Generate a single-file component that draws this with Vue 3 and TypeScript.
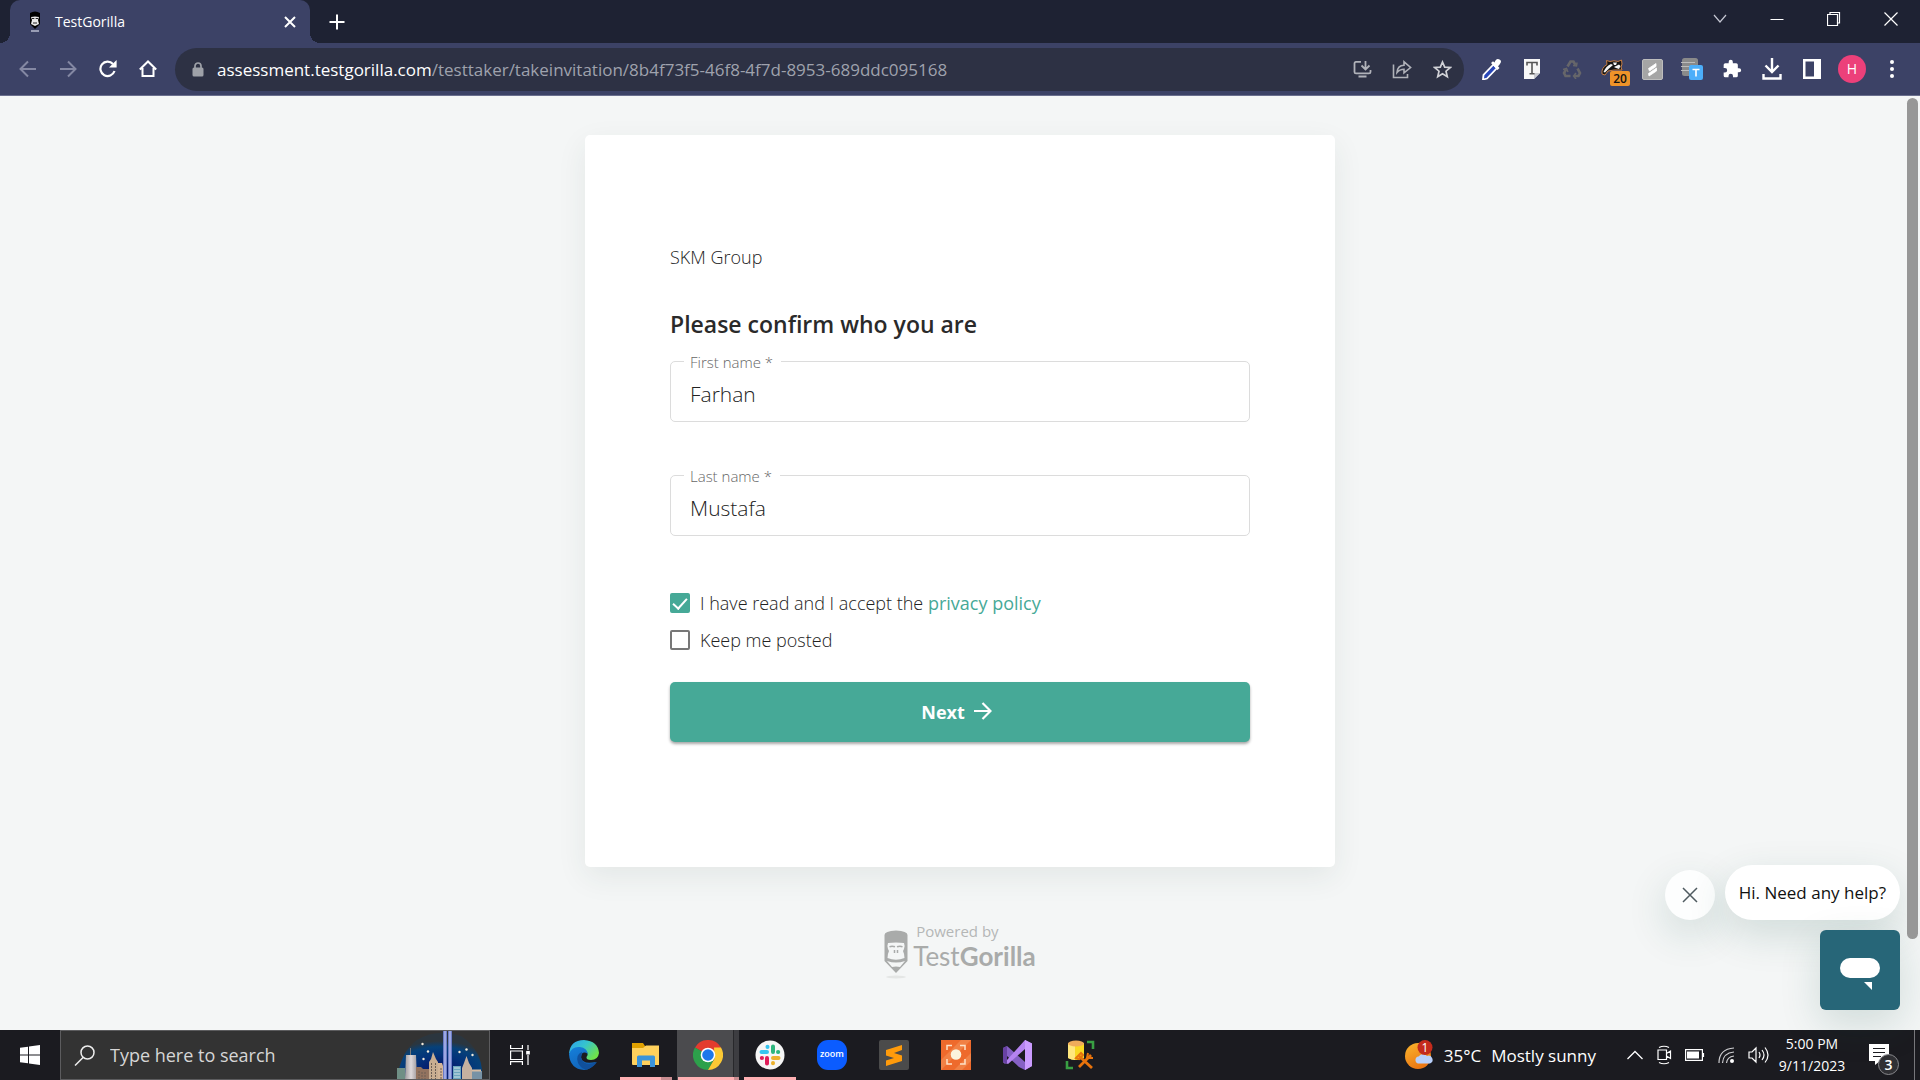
<script setup lang="ts">
import { ref } from 'vue'

const firstName = ref('Farhan')
const lastName = ref('Mustafa')
const acceptedPolicy = ref(true)
const keepPosted = ref(false)
const search = ref('')
</script>

<template>
  <div class="screen">
    <header class="tabstrip">
      <div class="tab">
        <svg class="favicon" width="12" height="22" viewBox="0 0 12 22" aria-hidden="true">
          <path d="M1 2Q6-1 11 2V13L6 18L1 13Z" fill="#000" />
          <path d="M2 6Q6 5 10 6L9 9L10 13L6 15L2 13L3 9Z" fill="#e8e8e8" />
          <path d="M3 7.500H5.300M6.700 7.500H9M4 12H8" stroke="#222" stroke-width="1" />
          <path d="M2 20H10" stroke="#b9bdd0" stroke-width="1.500" />
        </svg>
        <span class="tab-title">TestGorilla</span>
        <button class="plain tab-close" aria-label="Close tab">
          <svg width="12" height="12" viewBox="0 0 12 12"><path d="M1 1L11 11M11 1L1 11" stroke="#fff" stroke-width="2" /></svg>
        </button>
      </div>
      <button class="plain new-tab" aria-label="New tab">
        <svg width="16" height="16" viewBox="0 0 16 16"><path d="M8 0.500V15.500M0.500 8H15.500" stroke="#fff" stroke-width="2" /></svg>
      </button>
      <div class="window-buttons">
        <button class="plain" aria-label="Search tabs">
          <svg width="14" height="10" viewBox="0 0 14 10"><path d="M1 1L7 8L13 1" fill="none" stroke="#c4c6d2" stroke-width="1.200" /></svg>
        </button>
        <button class="plain" aria-label="Minimize">
          <svg width="14" height="14" viewBox="0 0 14 14"><path d="M0.500 7.500H13.500" stroke="#fff" /></svg>
        </button>
        <button class="plain" aria-label="Restore">
          <svg width="14" height="16" viewBox="0 0 14 16"><path d="M0.500 3.500H10.500V14.500H0.500ZM3 3V1.500H12.500V12H11" fill="none" stroke="#fff" stroke-width="1.200" /></svg>
        </button>
        <button class="plain" aria-label="Close">
          <svg width="14" height="14" viewBox="0 0 14 14"><path d="M0.500 0.500L13.500 13.500M13.500 0.500L0.500 13.500" stroke="#fff" stroke-width="1.200" /></svg>
        </button>
      </div>
    </header>

    <nav class="toolbar" aria-label="Browser toolbar">
      <button class="plain cell" aria-label="Back">
        <svg width="18" height="18" viewBox="0 0 18 18"><path d="M17 9H2M9 1.500L1.500 9L9 16.500" fill="none" stroke="#8488a3" stroke-width="2" /></svg>
      </button>
      <button class="plain cell" aria-label="Forward">
        <svg width="18" height="18" viewBox="0 0 18 18"><path d="M1 9H16M9 1.500L16.500 9L9 16.500" fill="none" stroke="#8488a3" stroke-width="2" /></svg>
      </button>
      <button class="plain cell" aria-label="Reload">
        <svg width="18" height="18" viewBox="0 0 18 18"><path d="M15.500 11A7.200 7.200 0 1 1 14 4" fill="none" stroke="#fff" stroke-width="2.200" /><path d="M17.600 0V7.500H10Z" fill="#fff" /></svg>
      </button>
      <button class="plain cell" aria-label="Home">
        <svg width="18" height="18" viewBox="0 0 18 18"><path d="M0.800 9.500L9 1.500L17.200 9.500M3.500 8V16H14.500V8" fill="none" stroke="#fff" stroke-width="2" /></svg>
      </button>

      <div class="omnibox">
        <svg width="12" height="15" viewBox="0 0 12 15" aria-hidden="true">
          <path d="M3 6V4A3 3 0 0 1 9 4V6" fill="none" stroke="#9ea1a8" stroke-width="1.700" />
          <rect x="0.500" y="5.500" width="11" height="9" rx="1.500" fill="#9ea1a8" />
        </svg>
        <div class="address" role="textbox" aria-label="Address" contenteditable="true" spellcheck="false"><span class="host">assessment.testgorilla.com</span>/testtaker/takeinvitation/8b4f73f5-46f8-4f7d-8953-689ddc095168</div>
        <button class="plain cell" aria-label="Install app">
          <svg width="19" height="18" viewBox="0 0 19 18" fill="none" stroke="#b0b2b9" stroke-width="1.800">
            <path d="M8 1.900H3Q1.500 1.900 1.500 3.400V12Q1.500 13.400 3 13.400H16Q17.500 13.400 17.500 12V10M5.500 16.500H13.500M12.500 1V9M8.500 5.500L12.500 9.500L16.500 5.500" />
          </svg>
        </button>
        <button class="plain cell" aria-label="Share">
          <svg width="20" height="19" viewBox="0 0 20 19" fill="none" stroke="#b0b2b9" stroke-width="1.600">
            <path d="M1.500 4.500V17.500H15.500V14M5 12.500Q5.500 5.500 12 5.300V1.800L18.600 7.500L12 12.800V9.300Q7.500 9.300 5 12.500Z" />
          </svg>
        </button>
        <button class="plain cell" aria-label="Bookmark">
          <svg width="19" height="19" viewBox="0 0 19 19"><path d="M9.500 2L11.700 7.100L17.300 7.500L13 11.200L14.300 16.700L9.500 13.800L4.700 16.700L6 11.200L1.700 7.500L7.300 7.100Z" fill="none" stroke="#d0d1d6" stroke-width="1.700" /></svg>
        </button>
      </div>

      <button class="plain cell" aria-label="Colour picker">
        <svg width="20" height="22" viewBox="0 0 20 22">
          <path d="M11.500 6.500L15 10L5 20.500L1 21.500L1.500 17Z" fill="#2947b8" stroke="#fff" stroke-width="1.800" />
          <path d="M9 5L11 3.200L12.500 4.500Q14 0 17 1.200Q20 2.500 18.500 5Q17.500 7 16 8.200L17.500 10L15.500 12Z" fill="#fff" />
        </svg>
      </button>
      <button class="plain cell" aria-label="Text tool">
        <svg width="16" height="20" viewBox="0 0 16 20">
          <path d="M0 0H16V14L10 20H0Z" fill="#f7f7f7" /><path d="M10 20V14H16Z" fill="#cacbd0" />
          <path d="M3 6.500V3.500H13V6.500M8 3.500V14.500M5.500 14.800H10.500" fill="none" stroke="#565656" stroke-width="1.600" />
        </svg>
      </button>
      <button class="plain cell" aria-label="Recycle">
        <svg width="20" height="20" viewBox="0 0 20 20" fill="none" stroke="#66666a" stroke-width="2.600">
          <path d="M5.500 7.500L8.500 2.500H11.500L13.500 6M15.500 9.500L18 14L16.500 17H12M8.500 17H3.500L2 14L4 10.500" />
          <path d="M11 6.500L14.500 7L15 3.500M14 14L11.500 17L14 20M1 10.500L4.500 9.500L6 13" stroke-width="1.500" />
        </svg>
      </button>
      <button class="plain cell badger" aria-label="Tracker blocker">
        <svg width="22" height="22" viewBox="0 0 22 22">
          <path d="M1 16Q0 10 6 6.500L5.500 2.500L9 3.500Q13 2 17 3.500L20.500 2L21 6L20 9L21 12H13L7 13L4 17Z" fill="#151515" stroke="#c77e43" />
          <path d="M2.500 14Q5 8 10 6L12 7L8 10.500L4 14.500ZM12 4.500H16L15 7H13ZM13 9L18 6.500L19.500 8L18 11L15 10Z" fill="#f4f4f4" />
        </svg>
        <span class="count">20</span>
      </button>
      <button class="plain cell" aria-label="Scribe">
        <svg width="21" height="21" viewBox="0 0 21 21">
          <rect x="0.500" y="0.500" width="20" height="20" rx="1.500" fill="#a5a5a5" stroke="#bdbdbd" />
          <path d="M6.500 9.500L14 4.500V7.500L7.500 12ZM6.500 14.500L14.500 9V12L7 17Z" fill="#fff" stroke="#fff" stroke-width="0.800" />
        </svg>
      </button>
      <button class="plain cell" aria-label="Text blocks">
        <svg width="22" height="22" viewBox="0 0 22 22">
          <rect x="1" y="0" width="16" height="18" rx="2.500" fill="#8a8a8a" />
          <path d="M0 4.500H14M0 8.500H14M0 12.500H8" stroke="#bcbcbc" stroke-width="1.200" />
          <rect x="8" y="7" width="14" height="15" rx="2" fill="#4caefa" />
          <path d="M11.500 11.500H18.500M15 11.500V18.500" stroke="#fff" stroke-width="1.600" />
        </svg>
      </button>
      <button class="plain cell" aria-label="Extensions">
        <svg width="20" height="20" viewBox="0 0 24 24"><path fill="#fff" d="M20.500 11H19V7a2 2 0 0 0-2-2h-4V3.500a2.500 2.500 0 0 0-5 0V5H4a2 2 0 0 0-2 2v3.800h1.500a2.700 2.700 0 0 1 0 5.400H2V20a2 2 0 0 0 2 2h3.800v-1.500a2.700 2.700 0 0 1 5.400 0V22H17a2 2 0 0 0 2-2v-4h1.500a2.500 2.500 0 0 0 0-5z" /></svg>
      </button>
      <button class="plain cell" aria-label="Downloads">
        <svg width="20" height="22" viewBox="0 0 20 22" fill="none" stroke="#fff" stroke-width="2.400"><path d="M10 0V13M3.500 7.500L10 14L16.500 7.500M1.500 16V20.500H18.500V16" /></svg>
      </button>
      <button class="plain cell" aria-label="Side panel">
        <svg width="18" height="20" viewBox="0 0 18 20"><path fill="#fff" fill-rule="evenodd" d="M0 0H18V20H0ZM2.500 2.500V17.500H11V2.500Z" /></svg>
      </button>
      <button class="plain cell" aria-label="Profile"><span class="avatar">H</span></button>
      <button class="plain cell" aria-label="Menu">
        <svg width="4" height="18" viewBox="0 0 4 18" fill="#fff"><circle cx="2" cy="2" r="2" /><circle cx="2" cy="9" r="2" /><circle cx="2" cy="16" r="2" /></svg>
      </button>
    </nav>

    <main class="page">
      <form class="card" @submit.prevent>
        <p class="company">SKM Group</p>
        <h1>Please confirm who you are</h1>
        <div class="field">
          <label for="first-name">First name *</label>
          <input id="first-name" v-model="firstName" type="text" />
        </div>
        <div class="field">
          <label for="last-name">Last name *</label>
          <input id="last-name" v-model="lastName" type="text" />
        </div>
        <div class="checks">
          <div class="check">
            <input id="policy" v-model="acceptedPolicy" type="checkbox" />
            <label for="policy">I have read and I accept the <a href="#privacy">privacy policy</a></label>
          </div>
          <div class="check">
            <input id="posted" v-model="keepPosted" type="checkbox" />
            <label for="posted">Keep me posted</label>
          </div>
        </div>
        <button class="next" type="submit">
          Next
          <svg width="18" height="20" viewBox="0 0 18 20" aria-hidden="true"><path d="M0 9H16M8.500 1L16.500 9L8.500 17" fill="none" stroke="#fff" stroke-width="2.200" /></svg>
        </button>
      </form>

      <footer class="powered">
        <svg class="powered-logo" width="24" height="50" viewBox="0 0 24 50" aria-hidden="true">
          <path fill="#a9abaa" fill-rule="evenodd" d="M0.500 5Q0.500 1 12 0.500Q23.500 1 23.500 5V31L12 43L0.500 31ZM4 13Q3 15 4 19L5 21Q3.500 24 3.500 28Q12 31.500 20.500 28Q20.500 24 19 21L20 19Q21 15 20 13Q12 12 4 13ZM3 31L8 37Q12 36 16 37L21 31Q12 34 3 31Z" />
          <path d="M5.500 16.800Q8 15.500 11 16.800M13 16.800Q16 15.500 18.500 16.800M10.500 20V23M13.500 20V23" fill="none" stroke="#a9abaa" stroke-width="1.500" />
          <ellipse cx="12" cy="47" rx="10" ry="1.500" fill="#e4e6e5" />
        </svg>
        <div class="powered-text">
          <span class="powered-by">Powered by</span>
          <span class="brand">Test<b>Gorilla</b></span>
        </div>
      </footer>

      <aside class="chat">
        <div class="chat-row">
          <button class="plain chat-close" aria-label="Dismiss">
            <svg width="16" height="16" viewBox="0 0 16 16"><path d="M1 1L15 15M15 1L1 15" stroke="#505b60" stroke-width="1.500" /></svg>
          </button>
          <button class="plain bubble">Hi. Need any help?</button>
        </div>
        <button class="plain launcher" aria-label="Open chat">
          <svg width="40" height="34" viewBox="0 0 40 34" fill="#fff"><rect width="40" height="20" rx="10" /><path d="M24 24H32V32Z" /></svg>
        </button>
      </aside>
      <div class="scrollbar"></div>
    </main>

    <div class="taskbar">
      <button class="plain start" aria-label="Start">
        <svg width="20" height="20" viewBox="0 0 20 20" fill="#fff"><path d="M0 2.800L8 1.700V9.400H0ZM9 1.500L20 0V9.400H9ZM0 10.500H8V18.200L0 17.200ZM9 10.500H20V20L9 18.500Z" /></svg>
      </button>
      <div class="search">
        <svg width="21" height="21" viewBox="0 0 21 21" fill="none" stroke="#eee" stroke-width="1.500" aria-hidden="true"><circle cx="13.500" cy="7.500" r="6.500" /><path d="M9 12.500L1 20.500" /></svg>
        <input v-model="search" type="text" aria-label="Type here to search" placeholder="Type here to search" />
        <svg class="skyline" width="92" height="48" viewBox="0 0 92 48" aria-hidden="true">
          <defs>
            <radialGradient id="sky" cx="50%" cy="80%" r="62%"><stop offset="0" stop-color="#0b1066" /><stop offset="0.500" stop-color="#03327a" /><stop offset="0.800" stop-color="#064179" /><stop offset="1" stop-color="#2b363f" /></radialGradient>
            <linearGradient id="beam" x1="0" x2="1" y1="0" y2="0"><stop offset="0" stop-color="#5366b8" /><stop offset="0.500" stop-color="#b4bef0" /><stop offset="1" stop-color="#5366b8" /></linearGradient>
            <linearGradient id="tower" x1="0" x2="1" y1="0" y2="0"><stop offset="0" stop-color="#9f9b9d" /><stop offset="0.500" stop-color="#ded9db" /><stop offset="1" stop-color="#a19c9e" /></linearGradient>
          </defs>
          <path d="M4 48Q8 20 24 9Q45-3 68 5Q91 20 89 48Z" fill="url(#sky)" />
          <g fill="#f3ead9"><circle cx="29.500" cy="13" r="1.200" /><circle cx="35" cy="20.500" r="1.200" /><circle cx="30.500" cy="28" r="1.200" /><circle cx="66.500" cy="21" r="1.200" /><circle cx="73.500" cy="18.500" r="1.200" /><circle cx="79.500" cy="24" r="1.200" /></g>
          <rect x="4" y="37" width="8" height="11" fill="#6f8f85" />
          <path d="M12 48L13 24H23L24 48Z" fill="url(#tower)" /><path d="M17.500 24V17" stroke="#777" />
          <path d="M23 36H28L30 38H37V48H23Z" fill="#93735f" />
          <path d="M36 48V31L38 28L40 21L43 28L45 31V48Z" fill="#c9ad91" />
          <path d="M45 32H49L51 38V48H45Z" fill="#d3b497" />
          <path d="M26 40V48M29 41V48M32 41V48M38.500 32V48M42.500 32V48M48 37V48" stroke="#6d5e55" stroke-dasharray="2 1" />
          <rect x="50" y="0" width="4" height="48" fill="url(#beam)" /><rect x="55" y="0" width="4" height="48" fill="url(#beam)" />
          <rect x="60" y="35" width="8" height="13" fill="#6ba6bd" /><path d="M61 37H67M61 40H67M61 43H67M61 46H67" stroke="#d5e4e9" />
          <path d="M69 48V37L71 32L73.500 25L76 32L79 37V48Z" fill="#c6b1a0" />
          <path d="M79 48V39H87V40H89V48Z" fill="#7792a5" /><path d="M79 39.500H88" stroke="#d5bca4" stroke-width="2" />
        </svg>
      </div>
      <button class="plain task-view" aria-label="Task view">
        <svg width="20" height="20" viewBox="0 0 20 20" fill="none" stroke="#fff" stroke-width="1.200"><path d="M0.600 0V3.500H12.400V0M0.600 6H12.400V14.500H0.600ZM0.600 20V16.700H12.400V20M18 0V5M18 10V20" /><rect x="16.800" y="6.500" width="2.400" height="2.400" fill="#fff" /></svg>
      </button>

      <div class="apps">
        <button class="plain" aria-label="Edge">
          <svg width="30" height="30" viewBox="0 0 30 30">
            <defs>
              <linearGradient id="edge-top" x1="0" y1="0" x2="1" y2="0.600"><stop offset="0" stop-color="#2b9ff0" /><stop offset="0.500" stop-color="#36c4cd" /><stop offset="1" stop-color="#6fe34a" /></linearGradient>
              <linearGradient id="edge-low" x1="0" y1="0" x2="0.500" y2="1"><stop offset="0" stop-color="#1580dc" /><stop offset="1" stop-color="#1264b8" /></linearGradient>
            </defs>
            <path d="M0 14Q1 0 15 0Q29 1 30 13Q29 20 22 20Q17 20 17.500 17Q20 14 17 11Q8 4 0 14Z" fill="url(#edge-top)" />
            <path d="M0 14Q3 6 11 7Q18 8 19 14Q13 10 12 17Q13 25 27 22Q22 30 15 30Q1 29 0 14Z" fill="url(#edge-low)" />
            <path d="M13 12Q6 15 9 23Q13 30 18 29.500Q25 27 28 22Q15 27 12 18Z" fill="#10509c" />
          </svg>
        </button>
        <button class="plain running" aria-label="File Explorer">
          <svg width="28" height="24" viewBox="0 0 28 24">
            <path d="M0 0H11L13 3H26V8H0Z" fill="#e1a100" /><path d="M0 5H11L14 2.500H27V22H1Q0 22 0 21Z" fill="#ffd15c" />
            <path d="M5 24V14Q5 12.500 6.500 12.500H21.500Q23 12.500 23 14V24H18V17.500H10V24Z" fill="#3b94da" />
          </svg>
          <i class="underline split"></i>
        </button>
        <button class="plain active" aria-label="Chrome">
          <svg width="30" height="30" viewBox="0 0 30 30">
            <path d="M15 15L2 7.500A15 15 0 0 1 28 7.500Z" fill="#e33b2e" /><path d="M15 15L2 7.500A15 15 0 0 0 15 30L21.500 18.500Z" fill="#2da04b" /><path d="M28 7.500A15 15 0 0 1 15 30L21.500 18.700L21 7.500Z" fill="#fcc934" />
            <circle cx="15" cy="15" r="7.300" fill="#fff" /><circle cx="15" cy="15" r="5.800" fill="#1d77ea" />
          </svg>
          <i class="underline split"></i>
        </button>
        <button class="plain running" aria-label="Slack">
          <svg width="30" height="30" viewBox="0 0 30 30">
            <circle cx="15" cy="15" r="14.500" fill="#f6f6f6" />
            <g fill="none" stroke-width="4" stroke-linecap="round"><path d="M6.500 12H12M12.500 7V6.800" stroke="#36c5f0" /><path d="M18 6.500V12M23 12H23.200" stroke="#2eb67d" /><path d="M12 18V23.500M7 18H6.800" stroke="#e01e5a" /><path d="M18 18H23.500M18 23V23.200" stroke="#ecb22e" /></g>
          </svg>
          <i class="underline"></i>
        </button>
        <button class="plain" aria-label="Zoom"><span class="zoom-icon">zoom</span></button>
        <button class="plain" aria-label="Sublime Text">
          <svg width="30" height="30" viewBox="0 0 30 30"><rect width="30" height="30" rx="2" fill="#4b4b4b" /><path d="M7 10L23 5V10L15 13L23 15.500V21L7 26V20.500L15 18L7 15.500Z" fill="#ff9b0b" /></svg>
        </button>
        <button class="plain" aria-label="Screen capture">
          <svg width="30" height="30" viewBox="0 0 30 30"><rect width="30" height="30" fill="#ee6a2c" /><path d="M0 20L20 0H30L0 30ZM13 30L30 13V21L21 30Z" fill="#f28b50" opacity="0.700" /><path d="M6 10V5.500H11M19 5.500H24V10M24 19V24H19M11 24H6V19" fill="none" stroke="#fde2c8" stroke-width="1.500" /><circle cx="15" cy="14.500" r="5.300" fill="#fbf3dc" /></svg>
        </button>
        <button class="plain" aria-label="Visual Studio">
          <svg width="30" height="30" viewBox="0 0 30 30"><path d="M0 8L4 6L22 22V30L16 27L4 16L3 19L4 22L2 24L0 22Z" fill="#8661c5" /><path d="M22 0L29 3.500V26L22 30V9L5 24L0 22L4 20Z" fill="#b583f0" /><path d="M0 8L4 6V24L0 22Z" fill="#6842a3" /><path d="M22 0L29 3.500V26L22 30Z" fill="#cb9cff" /></svg>
        </button>
        <button class="plain" aria-label="Database tools">
          <svg width="30" height="30" viewBox="0 0 30 30"><path d="M3 3V18Q11 22 19 18V3Z" fill="#f9d923" /><path d="M3 4V18Q6 20 10 20V5Z" fill="#ffe77d" /><ellipse cx="11" cy="3.500" rx="8" ry="3" fill="#efac5c" /><path d="M22 2H28V9M2 21V28H8" fill="none" stroke="#39a043" stroke-width="2.600" /><path d="M14 27L26 15M14 16L27 28" stroke="#e8730c" stroke-width="2.800" /><path d="M11 18L16 13L18 15L14 19ZM23 13L22 18L28 18" fill="none" stroke="#e8730c" stroke-width="2" /></svg>
        </button>
      </div>

      <button class="plain weather">
        <svg width="30" height="30" viewBox="0 0 30 30" aria-hidden="true">
          <defs><linearGradient id="sun" x1="0" y1="0" x2="0.500" y2="1"><stop offset="0" stop-color="#fbb62d" /><stop offset="1" stop-color="#ea7613" /></linearGradient></defs>
          <circle cx="14" cy="16" r="13" fill="url(#sun)" /><path d="M14 23.500A3.600 3.600 0 0 1 14.500 16.500Q19 12 23 16A3.800 3.800 0 0 1 26 23.500Z" fill="#b8d0fb" />
          <circle cx="21" cy="7.500" r="7.500" fill="#c42b1c" /><text x="21" y="12" text-anchor="middle" font-family="Open Sans, sans-serif" font-size="12" fill="#fff">1</text>
        </svg>
        <span>35°C</span><span>Mostly sunny</span>
      </button>
      <div class="tray">
        <button class="plain" aria-label="Show hidden icons"><svg width="16" height="10" viewBox="0 0 16 10"><path d="M0.500 9L8 1.500L15.500 9" fill="none" stroke="#fff" stroke-width="1.300" /></svg></button>
        <button class="plain" aria-label="Meet now"><svg width="16" height="20" viewBox="0 0 16 20" fill="none" stroke="#fff" stroke-width="1.200"><path d="M2 5H10.500V14.500H2ZM10.500 8.500L14.500 6V13.500L10.500 11M3 2.500Q8 0 13 2.500M3 17.500Q8 20 13 17.500" /></svg></button>
        <button class="plain" aria-label="Battery"><svg width="20" height="12" viewBox="0 0 20 12"><rect x="0.600" y="0.600" width="16.800" height="10.800" fill="none" stroke="#fff" stroke-width="1.200" /><rect x="2" y="2.500" width="12" height="7" fill="#fff" /><path d="M18.500 4V8" stroke="#fff" stroke-width="1.200" /></svg></button>
        <button class="plain" aria-label="Wi-Fi"><svg width="17" height="17" viewBox="0 0 17 17" fill="none" stroke="#fff" stroke-width="1.200"><path d="M1 16Q1 2 16 1M4.500 16Q5 6 16 5M8.500 16Q9 10 16 9" stroke="#cfcfd2" /><circle cx="14" cy="14" r="2" fill="#fff" stroke="none" /></svg></button>
        <button class="plain" aria-label="Volume"><svg width="22" height="18" viewBox="0 0 22 18" fill="none" stroke="#fff" stroke-width="1.200"><path d="M1 6H4L8 2V16L4 12H1ZM11 6Q13 9 11 12M14 4Q18 9 14 14M17 1.500Q23 9 17 16.500" /></svg></button>
      </div>
      <button class="plain clock"><span>5:00 PM</span><span>9/11/2023</span></button>
      <button class="plain notify" aria-label="Notifications">
        <svg width="20" height="22" viewBox="0 0 20 22"><path d="M0 0H20V17H11L6 21V17H0Z" fill="#fff" /><path d="M4 4.500H16M4 8.500H16M4 12.500H12" stroke="#1b1b20" stroke-width="1.200" /></svg>
        <span class="notify-count">3</span>
      </button>
    </div>
  </div>
</template>

<style>
body { margin: 0; }
</style>

<style scoped>
* { box-sizing: border-box; }
.screen {
  min-height: 100vh;
  display: flex;
  flex-direction: column;
  font-family: 'Open Sans', 'Noto Sans', sans-serif;
  background: #f4f6f6;
}
.plain {
  border: 0;
  padding: 0;
  background: none;
  color: inherit;
  font: inherit;
  display: flex;
  align-items: center;
  justify-content: center;
}
svg { display: block; flex: none; }

.tabstrip { height: 43px; display: flex; background: #1e2233; }
.tab {
  width: 300px;
  margin-left: 10px;
  padding: 0 14px 0 19px;
  display: flex;
  align-items: center;
  background: #3c4266;
  border-radius: 10px 10px 0 0;
  color: #fff;
  font-size: 14px;
  position: relative;
}
.tab::before, .tab::after {
  content: '';
  position: absolute;
  bottom: 0;
  width: 10px;
  height: 10px;
}
.tab::before { left: -10px; background: radial-gradient(circle at 0 0, transparent 10px, #3c4266 10px); }
.tab::after { right: -10px; background: radial-gradient(circle at 100% 0, transparent 10px, #3c4266 10px); }
.tab-title { flex: 1; margin-left: 14px; }
.new-tab { margin-left: 19px; }
.window-buttons { margin-left: auto; display: flex; padding: 0 1px 6px 0; }
.window-buttons .plain { width: 57px; }

.toolbar {
  height: 53px;
  padding: 0 8px;
  display: flex;
  align-items: center;
  background: #3c4266;
  border-bottom: 1px solid #6a6f8e;
}
.cell { width: 40px; height: 40px; flex: none; }
.omnibox {
  flex: 1;
  height: 43px;
  margin: 0 8px 0 7px;
  padding: 0 2px 0 17px;
  display: flex;
  align-items: center;
  border-radius: 22px;
  background: #2d3144;
}
.address { flex: 1; margin-left: 13px; color: #9fa2ad; font-size: 17px; white-space: nowrap; outline: 0; }
.host { color: #fff; }
.badger { position: relative; }
.count {
  position: absolute;
  left: 18px;
  top: 22px;
  width: 20px;
  height: 15px;
  border-radius: 2px;
  background: #ee9329;
  color: #111;
  font-size: 12px;
  font-weight: 600;
  line-height: 15px;
}
.avatar {
  width: 28px;
  height: 28px;
  border-radius: 50%;
  background: #ec407a;
  color: #fff;
  font-size: 14px;
  line-height: 28px;
}

.page {
  flex: 1;
  position: relative;
  padding: 39px 0 40px;
  display: flex;
  flex-direction: column;
  align-items: center;
}
.card {
  width: 750px;
  max-width: 100%;
  padding: 108px 85px 125px;
  border-radius: 5px;
  background: #fff;
  box-shadow: 0 10px 30px rgba(40, 60, 50, 0.08);
  color: #222;
  font-weight: 300;
}
.company { margin: 0; font-size: 18px; line-height: 28px; }
h1 { margin: 36px 0 20px; font-size: 23px; line-height: 34px; font-weight: 600; color: #2a2a2a; }
.field { position: relative; margin-bottom: 53px; }
.field label {
  position: absolute;
  left: 14px;
  top: -10px;
  padding: 0 8px 0 6px;
  background: #fff;
  color: #666;
  font-size: 15px;
  line-height: 22px;
}
.field input {
  display: block;
  width: 100%;
  height: 61px;
  padding: 5px 19px 0;
  border: 1px solid #dcdcdc;
  border-radius: 5px;
  outline: 0;
  background: transparent;
  color: #222;
  font: inherit;
  font-size: 21px;
}
.checks { display: flex; flex-direction: column; gap: 9px; }
.check { display: flex; align-items: center; gap: 10px; font-size: 18px; line-height: 28px; }
.check input {
  appearance: none;
  width: 20px;
  height: 20px;
  margin: 0;
  border: 2px solid #777;
  border-radius: 2px;
  display: grid;
  place-items: center;
}
.check input:checked { border-color: #46a997; background: #46a997; }
.check input:checked::after {
  content: '';
  width: 6px;
  height: 12px;
  margin-bottom: 4px;
  border: solid #fff;
  border-width: 0 2px 2px 0;
  transform: rotate(42deg);
}
.check a { color: #46a997; text-decoration: none; font-weight: 400; }
.next {
  width: 100%;
  height: 60px;
  margin-top: 28px;
  padding: 0 7px 0 0;
  display: flex;
  align-items: center;
  justify-content: center;
  gap: 9px;
  border: 0;
  border-radius: 5px;
  background: #46a997;
  box-shadow: 0 2px 3px rgba(0, 0, 0, 0.35);
  color: #fff;
  font: inherit;
  font-size: 18px;
  font-weight: 700;
}
.powered { margin-top: 54px; display: flex; align-items: flex-start; gap: 5px; color: #a9abaa; }
.powered-logo { margin-top: 9px; }
.powered-text { display: flex; flex-direction: column; }
.powered-by { padding-left: 3px; color: #b5b7b6; font-size: 15px; line-height: 20px; }
.brand { font-family: Lato, 'Open Sans', sans-serif; font-size: 26px; line-height: 30px; }

.chat {
  position: absolute;
  right: 20px;
  bottom: 20px;
  display: flex;
  flex-direction: column;
  align-items: flex-end;
  gap: 10px;
}
.chat-row { display: flex; align-items: flex-end; gap: 10px; }
.chat-close, .bubble, .launcher { box-shadow: 0 14px 40px rgba(20, 80, 70, 0.16); }
.chat-close { width: 50px; height: 50px; border-radius: 50%; background: #fdfefe; }
.bubble { height: 55px; padding: 0 14px; border-radius: 28px; background: #fff; color: #111; font-size: 17px; white-space: nowrap; }
.launcher { width: 80px; height: 80px; padding-top: 10px; border-radius: 6px; background: #276678; }
.scrollbar { position: absolute; right: 2px; top: 2px; width: 11px; height: 90%; border-radius: 6px; background: #979797; }

.taskbar { height: 50px; display: flex; background: #1b1b20; color: #fff; }
.start { width: 60px; }
.search {
  width: 430px;
  padding: 0 4px 0 13px;
  display: flex;
  align-items: center;
  border: 1px solid #5c5c5e;
  background: #333;
}
.search input {
  flex: 1;
  min-width: 0;
  margin-left: 15px;
  padding: 0;
  border: 0;
  outline: 0;
  background: none;
  color: #fff;
  font: inherit;
  font-size: 18px;
}
.search input::placeholder { color: #d6d6d6; opacity: 1; }
.task-view { width: 60px; }
.apps { display: flex; margin-left: 3px; }
.apps .plain { width: 62px; position: relative; }
.apps .active { background: linear-gradient(90deg, #4b4b4e 56px, #28282b 56px, #28282b 57px, #3d3d41 57px); }
.underline { position: absolute; left: 5px; right: 5px; bottom: 0; height: 3px; background: #ffb0b3; }
.underline.split { background: linear-gradient(90deg, #ffb0b3 calc(100% - 11px), #c98d91 0); }
.active .underline.split { left: 1px; right: 0; background: linear-gradient(90deg, #ffb0b3 calc(100% - 5px), #c98d91 0); }
.zoom-icon {
  width: 30px;
  height: 30px;
  border-radius: 11px;
  background: #0b5cff;
  font-size: 9px;
  font-weight: 600;
  line-height: 28px;
}
.weather { margin-left: auto; gap: 10px; font-size: 17px; white-space: nowrap; }
.tray { display: flex; gap: 13px; margin-left: 31px; }
.clock { width: 70px; margin-left: 7px; flex-direction: column; font-size: 14px; line-height: 22px; white-space: nowrap; }
.notify { width: 68px; padding-right: 4px; position: relative; border-right: 1px solid #77777b; margin-right: 5px; }
.notify-count {
  position: absolute;
  right: 15px;
  top: 24px;
  width: 21px;
  height: 21px;
  border: 1px solid #88888c;
  border-radius: 50%;
  background: #303034;
  font-size: 14px;
  font-weight: 600;
  line-height: 19px;
}
</style>
